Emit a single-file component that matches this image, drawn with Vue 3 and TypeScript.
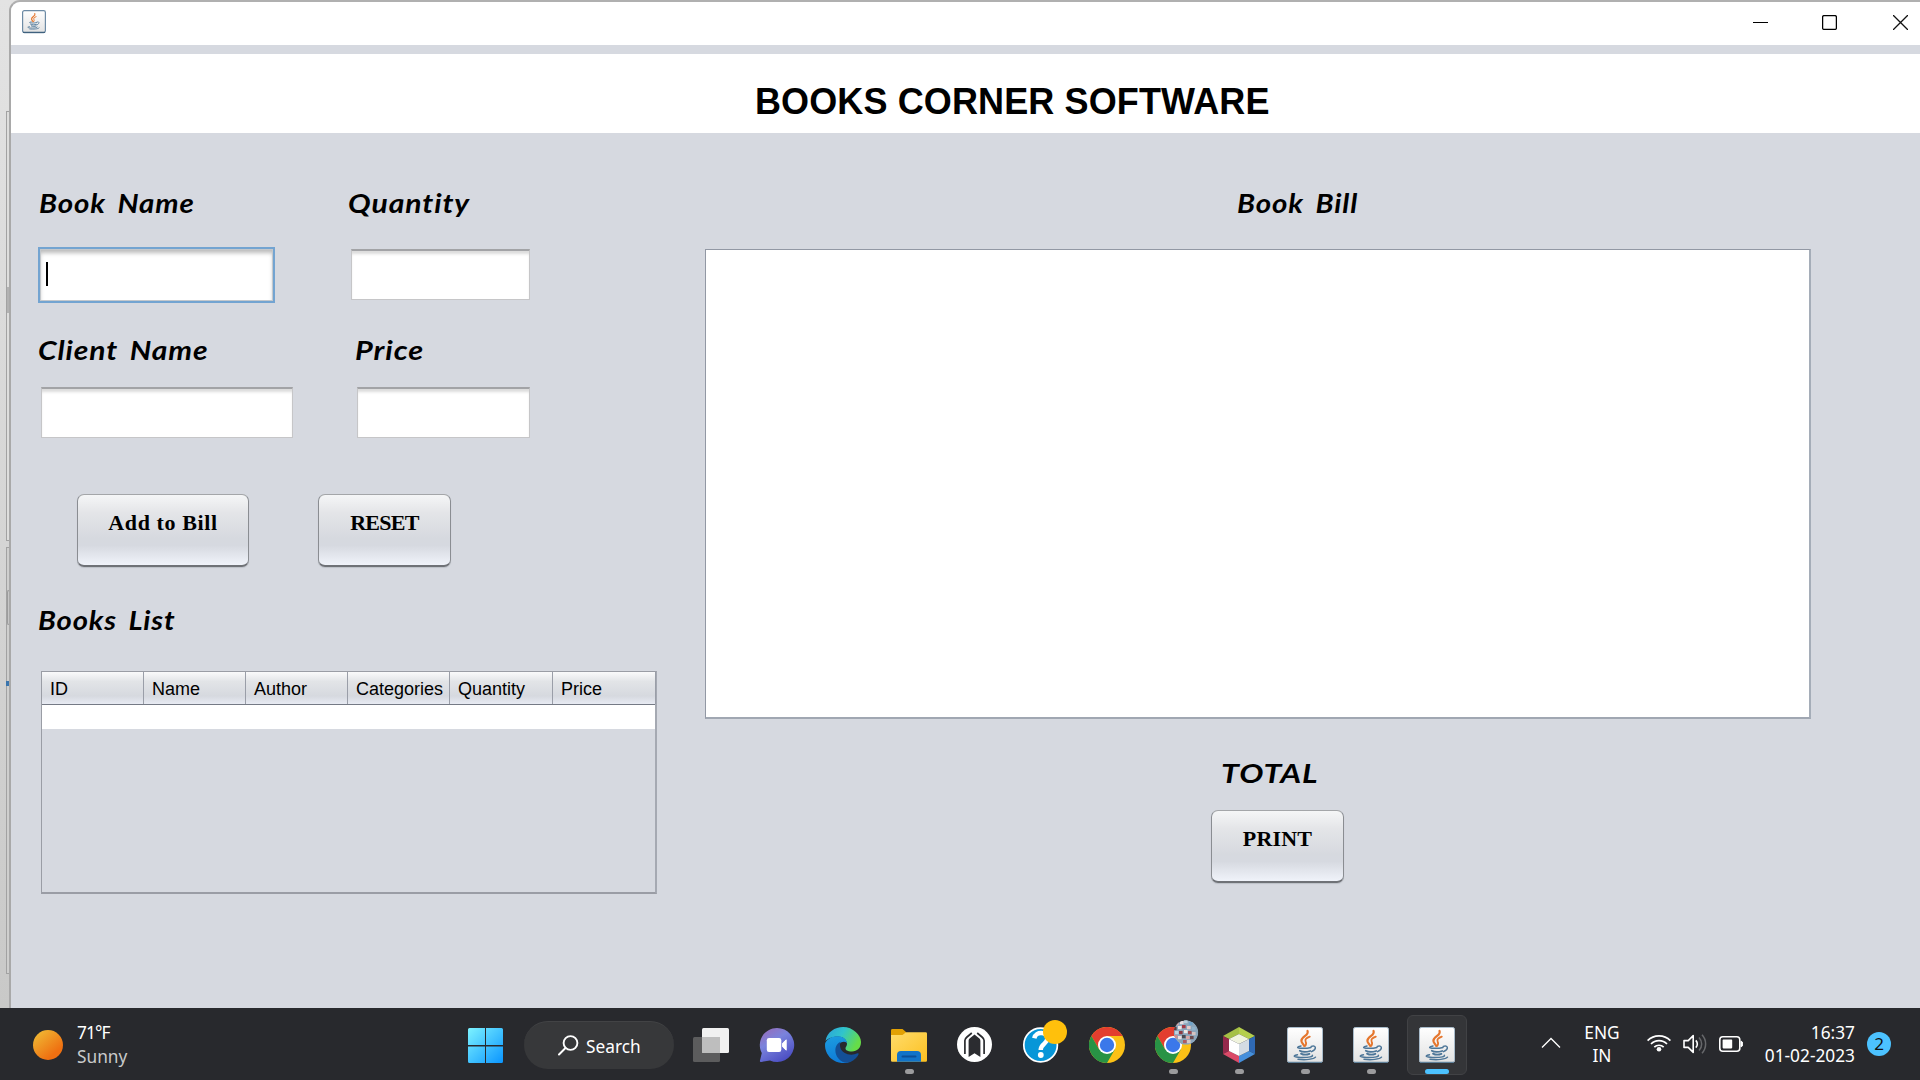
<script setup lang="ts">
interface Column { name: string; width: number }

const columns: Column[] = [
  { name: 'ID', width: 102 },
  { name: 'Name', width: 102 },
  { name: 'Author', width: 102 },
  { name: 'Categories', width: 102 },
  { name: 'Quantity', width: 103 },
  { name: 'Price', width: 103 },
]

const javaTasks: { id: number; active: boolean }[] = [
  { id: 1, active: false },
  { id: 2, active: false },
  { id: 3, active: true },
]

const avatarDots: [number, number, string][] = [
  [22, -3, '#d9a5a8'], [27, -4, '#e8dde0'], [31, -5, '#b9cfdd'], [36, -3, '#6fa3c9'],
  [20, 2, '#5b3a3c'], [25, 1, '#f0e4e4'], [29, 0, '#a33a48'], [34, 1, '#e5c9c8'], [39, 2, '#8fb2cb'],
  [22, 6, '#bfd2e0'], [26, 6, '#8d3a42'], [31, 5, '#f3e8e6'], [35, 6, '#9f4a50'], [39, 7, '#d5c3c3'],
  [21, 10, '#c98f92'], [25, 11, '#ecdcdc'], [29, 10, '#4d4a52'], [33, 11, '#dba7a7'], [37, 11, '#6b4a4e'],
  [26, 15, '#8aa5b5'], [30, 15, '#b05a60'], [34, 15, '#d8c8c4'],
]
</script>

<template>
  <div class="screen">
    <svg width="0" height="0" class="defs" aria-hidden="true">
      <defs>
        <linearGradient id="tile" x1="0" y1="0" x2="0" y2="1">
          <stop offset="0" stop-color="#ffffff" /><stop offset="1" stop-color="#e2e2e2" />
        </linearGradient>
        <linearGradient id="win" x1="0" y1="0" x2="1" y2="1">
          <stop offset="0" stop-color="#7df3ff" /><stop offset="1" stop-color="#0a95ff" />
        </linearGradient>
        <linearGradient id="chat" x1="0" y1="0" x2="0.6" y2="1">
          <stop offset="0" stop-color="#9a68b4" /><stop offset="0.45" stop-color="#7a83dc" /><stop offset="1" stop-color="#4d50c4" />
        </linearGradient>
        <linearGradient id="edgeTop" x1="0" y1="0" x2="1" y2="0.4">
          <stop offset="0" stop-color="#2aa0dc" /><stop offset="0.5" stop-color="#30c4cc" /><stop offset="1" stop-color="#66dd48" />
        </linearGradient>
        <linearGradient id="edgeLeft" x1="0" y1="0" x2="0.2" y2="1">
          <stop offset="0" stop-color="#1c9de0" /><stop offset="1" stop-color="#0f7cd8" />
        </linearGradient>
        <linearGradient id="folder" x1="0" y1="0" x2="1" y2="1">
          <stop offset="0" stop-color="#ffdc6b" /><stop offset="1" stop-color="#fcc021" />
        </linearGradient>
        <symbol id="cup" viewBox="0 0 36 36">
          <g fill="none" stroke-linecap="round">
            <path d="M20.5 4C22.5 8.5 14 9.5 14.4 14C14.6 16 16.6 17 17.2 19" stroke="#e5762d" stroke-width="2.2" />
            <path d="M22.8 9.6C19.6 10.8 17.7 12.3 18.6 14.4C19.4 16 19.7 17 18.2 18.8" stroke="#e5762d" stroke-width="1.8" />
            <path d="M14 19C10 19.8 9.5 20.8 13 21.2C17 21.6 21 21.2 24 20.5" stroke="#4d7698" stroke-width="1.5" />
            <path d="M24.3 19.4C28.8 17.8 30.4 21.8 24.5 24.7" stroke="#4d7698" stroke-width="1.5" />
            <path d="M12.8 23.7C15 25 20 25 23.2 24M14 26.6C16.5 27.9 20 27.8 22.4 26.8" stroke="#4d7698" stroke-width="1.8" />
            <path d="M10.5 27.8C3.5 29.2 9 30.5 16 30.5C22 30.5 26.5 29.5 25.3 28.2M11 32.3C18 33.2 27 32.4 28.5 30.2" stroke="#4d7698" stroke-width="1.4" />
          </g>
        </symbol>
        <symbol id="chrome" viewBox="-18 -18 36 36">
          <circle r="18" fill="#fbc116" />
          <path d="M-15.6-9A18 18 0 0 1 15.6-9H0L-7.8 4.5Z" fill="#e33e2f" />
          <path d="M-15.6-9L-7.8 4.5L7.8 4.5L0 18A18 18 0 0 1-15.6-9Z" fill="#289345" />
          <circle r="9" fill="#fff" /><circle r="7.2" fill="#3b78ea" />
        </symbol>
      </defs>
    </svg>

    <div class="desktop">
      <aside class="behind">
        <div class="pane pane-a"><i class="block"></i></div>
        <div class="pane pane-b"><i class="knob"></i><i class="mark"></i></div>
      </aside>

      <main class="window">
        <header class="titlebar">
          <svg class="app-icon" width="24" height="24" viewBox="0 0 24 24">
            <rect x="0.6" y="0.6" width="22.8" height="22" rx="1.8" fill="url(#tile)" stroke="#6d8ba5" stroke-width="1.2" />
            <path d="M1 22.4H23" stroke="#3f617e" stroke-width="1.2" />
            <use href="#cup" x="1" y="1.5" width="21" height="19.5" />
          </svg>
          <div class="controls">
            <svg width="15" height="15"><path d="M0 7.5H15" stroke="#000" /></svg>
            <svg width="15" height="15"><rect x="0.6" y="0.6" width="13.8" height="13.8" rx="1.5" fill="none" stroke="#000" stroke-width="1.3" /></svg>
            <svg width="15" height="15"><path d="M0 0L15 15M15 0L0 15" stroke="#111" stroke-width="1.3" /></svg>
          </div>
        </header>
        <div class="banner"><h1>BOOKS CORNER SOFTWARE</h1></div>

        <div class="content">
          <section class="left">
            <div class="form">
              <div class="col first">
                <label class="ink book-name">Book Name</label>
                <div class="field focused"><span class="caret"></span></div>
                <label class="ink client-name">Client Name</label>
                <div class="field client"></div>
              </div>
              <div class="col second">
                <label class="ink quantity">Quantity</label>
                <div class="field qty"></div>
                <label class="ink price">Price</label>
                <div class="field cost"></div>
              </div>
            </div>
            <div class="actions">
              <button class="btn add"><span>Add to Bill</span></button>
              <button class="btn reset"><span>RESET</span></button>
            </div>
            <div class="ink books-list">Books List</div>
            <div class="table">
              <div class="thead">
                <div v-for="c in columns" :key="c.name" class="th" :style="{ width: c.width + 'px' }">{{ c.name }}</div>
              </div>
              <div class="row"></div>
            </div>
          </section>

          <section class="right">
            <div class="ink book-bill">Book Bill</div>
            <div class="bill"></div>
            <div class="ink total">TOTAL</div>
            <button class="btn print"><span>PRINT</span></button>
          </section>
        </div>
      </main>
    </div>

    <footer class="taskbar">
      <div class="weather">
        <div class="sun"></div>
        <div class="wtext"><b>71°F</b><span>Sunny</span></div>
      </div>

      <div class="apps">
        <svg class="start" width="35" height="35" viewBox="0 0 35 35">
          <path d="M1.5 0H17V17H0V1.5A1.5 1.5 0 0 1 1.5 0ZM18 0H33.5A1.5 1.5 0 0 1 35 1.5V17H18ZM0 18.5H17V35H1.5A1.5 1.5 0 0 1 0 33.5ZM18 18.5H35V33.5A1.5 1.5 0 0 1 33.5 35H18Z" fill="url(#win)" />
        </svg>
        <div class="search">
          <svg width="21" height="21" viewBox="0 0 21 21"><circle cx="12.5" cy="8" r="6.9" fill="none" stroke="#fff" stroke-width="1.9" /><path d="M7.5 13L1 19.5" stroke="#fff" stroke-width="2" stroke-linecap="round" /></svg>
          <span>Search</span>
        </div>

        <div class="slot">
          <svg width="36" height="36" viewBox="0 0 36 36">
            <rect x="0" y="10" width="27" height="25" rx="1.5" fill="#5c5c5d" />
            <rect x="9" y="1" width="27" height="25" rx="1.5" fill="#f1f1f1" />
            <path d="M9 10H27V26H10.5A1.5 1.5 0 0 1 9 24.5Z" fill="#bebebe" />
          </svg>
        </div>
        <div class="slot">
          <svg width="36" height="36" viewBox="0 0 36 36">
            <path d="M18 1A17 17 0 1 1 11 33.4L2.2 35C1 35.2.7 34.5 1 33.6L2.8 26A17 17 0 0 1 18 1Z" fill="url(#chat)" />
            <rect x="7.8" y="11" width="14.5" height="14" rx="2.2" fill="#fff" />
            <path d="M23.6 16.2L27.2 12.8V23.2L23.6 19.8Z" fill="#fff" stroke="#fff" stroke-linejoin="round" />
          </svg>
        </div>
        <div class="slot">
          <svg width="36" height="36" viewBox="0 0 36 36">
            <path d="M.5 14C2 5 10 0 18 0C28 0 36 8 36 15C36 21 32 24.5 27 24.5C22 24.5 20.5 22.8 20.5 21.3C20.5 20 22 19 22 17C22 13 18 9.5 13 9.5C7 9.5 2 12 .5 14Z" fill="url(#edgeTop)" />
            <path d="M.2 16C3 11 8 9.3 12.5 9.3C17.5 9.3 21.5 12 22 16C19.5 13.8 16.5 14.5 14.5 17C12 21 13 30 24 35C20 37 12 36.5 6 31.5C1 27-.5 21 .2 16Z" fill="url(#edgeLeft)" />
            <path d="M16 14.5C10 17 8.5 25 13 31C17 36 22 36.5 25.5 35C30 32.8 32.5 29.5 33.6 27.2C33.9 26.4 33.2 26 32.5 26.3C26 29.5 17 27 15.3 20.5C14.7 18 14.8 16 16 14.5Z" fill="#134f96" />
          </svg>
        </div>
        <div class="slot run">
          <svg width="36" height="36" viewBox="0 0 36 36">
            <path d="M0 3.4A1.4 1.4 0 0 1 1.4 2H11.5L15 5V9H0Z" fill="#e2a104" />
            <path d="M0 8H11.5L15 5.2H34.6A1.4 1.4 0 0 1 36 6.6V33.5A1.2 1.2 0 0 1 34.8 34.7H1.2A1.2 1.2 0 0 1 0 33.5Z" fill="url(#folder)" />
            <path d="M6 34.7V28A4 4 0 0 1 10 24H26A4 4 0 0 1 30 28V34.7Z" fill="#1173c8" />
            <path d="M11.5 29.5H24.5" stroke="#0b4f97" stroke-width="2" stroke-linecap="round" />
          </svg>
        </div>
        <div class="slot">
          <svg width="36" height="36" viewBox="0 0 36 36">
            <circle cx="17.5" cy="17.5" r="17.5" fill="#fff" />
            <path d="M11.6 30V14.2C11.6 12.6 12 12 13.5 10.8L17.5 7.6L21.5 10.8C23 12 23.4 12.6 23.4 14.2V30L17.5 26.2Z" fill="#2b2c30" />
            <path d="M7.9 27V13.5C7.9 12 8.6 11.2 10 10L14.8 6M27.1 27V13.5C27.1 12 26.4 11.2 25 10L20.2 6" fill="none" stroke="#2b2c30" stroke-width="1.7" />
          </svg>
        </div>
        <div class="slot">
          <svg width="36" height="36" viewBox="0 0 36 36" class="spill">
            <circle cx="17.6" cy="18" r="16.8" fill="#0796d8" stroke="#fff" stroke-width="1.7" />
            <path d="M11.3 11.2C12.8 3.6 25 4.6 24.3 12C23.8 17 17.7 17 17.7 23" fill="none" stroke="#fff" stroke-width="4.5" />
            <circle cx="17.8" cy="28" r="2.9" fill="#fff" />
            <circle cx="32" cy="5" r="12" fill="#ffc00c" />
          </svg>
        </div>
        <div class="slot">
          <svg width="36" height="36"><use href="#chrome" width="36" height="36" /></svg>
        </div>
        <div class="slot run">
          <svg width="36" height="36" class="spill">
            <use href="#chrome" width="36" height="36" />
            <clipPath id="face"><circle cx="31" cy="5.5" r="12.3" /></clipPath>
            <g clip-path="url(#face)">
              <circle cx="31" cy="5.5" r="12.3" fill="#8ba6bc" />
              <rect v-for="(d, i) in avatarDots" :key="i" :x="d[0] - 2" :y="d[1] - 2" width="3.6" height="3.2" :fill="d[2]" />
            </g>
          </svg>
        </div>
        <div class="slot run">
          <svg width="36" height="36" viewBox="0 0 36 36">
            <path d="M2 9L18 0V7L8 12Z" fill="#a5c045" /><path d="M18 0L34 9L28 12L18 7Z" fill="#b5cf4b" />
            <path d="M2 9L8 12V24L2 27Z" fill="#94294b" /><path d="M34 9L28 12V24L34 27Z" fill="#2f69b4" />
            <path d="M2 27L8 24L18 29V36Z" fill="#db4a68" /><path d="M34 27L28 24L18 29V36Z" fill="#458fdb" />
            <path d="M8 12L18 7L28 12L18 17Z" fill="#f0f4dd" /><path d="M8 12L18 17V29L8 24Z" fill="#fff" /><path d="M28 12L18 17V29L28 24Z" fill="#d3dce3" />
          </svg>
        </div>
        <div v-for="t in javaTasks" :key="t.id" class="slot run" :class="{ active: t.active }">
          <svg width="36" height="36" viewBox="0 0 36 36">
            <rect x="0.5" y="0.5" width="35" height="35" rx="1.8" fill="url(#tile)" stroke="#a9bccb" />
            <path d="M1 35.3H35" stroke="#5f8099" stroke-width="1.2" />
            <use href="#cup" width="36" height="36" />
          </svg>
        </div>
      </div>

      <div class="tray">
        <svg class="chev" width="20" height="12" viewBox="0 0 20 12"><path d="M1 10.5L10 1.5L19 10.5" fill="none" stroke="#fff" stroke-width="1.3" /></svg>
        <div class="lang"><span>ENG</span><span>IN</span></div>
        <svg class="wifi" width="24" height="18" viewBox="0 0 24 18">
          <g fill="none" stroke="#fff" stroke-width="1.7"><path d="M.6 6.6A16 16 0 0 1 23.4 6.6M4 10A11.2 11.2 0 0 1 20 10M7.3 13.2A6.6 6.6 0 0 1 16.7 13.2" /></g>
          <circle cx="12" cy="15.3" r="2.3" fill="#fff" />
        </svg>
        <svg class="vol" width="25" height="20" viewBox="0 0 25 20">
          <path d="M1 6.6H5.2L10.2 1.6V18.4L5.2 13.4H1Z" fill="none" stroke="#fff" stroke-width="1.6" stroke-linejoin="round" />
          <path d="M12.8 6.4A5 5 0 0 1 12.8 13.6" fill="none" stroke="#fff" stroke-width="1.6" />
          <path d="M16 3.4A9.5 9.5 0 0 1 16 16.6M19 .8A13.5 13.5 0 0 1 19 19.2" fill="none" stroke="#67686b" stroke-width="1.5" />
        </svg>
        <svg class="bat" width="24" height="16" viewBox="0 0 24 16">
          <rect x="0.8" y="0.8" width="20" height="14.4" rx="3" fill="none" stroke="#fff" stroke-width="1.6" />
          <rect x="3.6" y="3.6" width="9.6" height="8.8" rx="0.8" fill="#fff" />
          <path d="M22 5.2C24.4 5.4 24.4 10.6 22 10.8Z" fill="#fff" stroke="#fff" />
        </svg>
        <div class="clock"><span>16:37</span><span class="date">01-02-2023</span></div>
        <div class="count">2</div>
      </div>
    </footer>
  </div>
</template>

<style>
body { margin: 0; background: #d6d9e0; overflow: hidden; }
</style>

<style scoped>
* { box-sizing: border-box; }
.screen { width: 1920px; height: 1080px; display: flex; flex-direction: column; overflow: hidden; }
.defs { position: absolute; }
.desktop { display: flex; height: 1008px; background: linear-gradient(#e3e3e3, #c9c9c8); }

.behind { width: 9px; flex: none; padding: 111px 0 0 6px; }
.pane { border: 1px solid #a2a2a2; border-right: 0; height: 430px; background: #dededd; }
.pane-a { padding-top: 175px; }
.block { display: block; height: 26px; background: #b2b2b2; }
.pane-b { margin-top: 6px; height: 427px; background: #cfcfce; padding-top: 42px; display: flex; flex-direction: column; }
.knob { height: 35px; border: 1px solid #9c9c9c; border-right: 0; border-radius: 4px 0 0 4px; background: #c6c6c6; }
.mark { margin: 56px 0 0 -1px; height: 5px; background: #3b75ad; }

.window { flex: 1; height: 1008px; border-left: 2px solid #a9a9a9; border-top: 2px solid #b0b0b0; border-top-left-radius: 11px; background: #d6d9e0; overflow: hidden; }
.titlebar { height: 43px; background: #fff; display: flex; justify-content: space-between; }
.app-icon { margin: 8px 0 0 11px; }
.controls { display: flex; padding: 13px 12px 0 0; }
.controls svg { margin-left: 56px; }
.controls svg:first-child { margin-left: 0; margin-right: -2px; }
.banner { margin-top: 9px; height: 79px; background: #fff; padding: 27px 0 0 744px; }
h1 { margin: 0; font: bold 36px/41px "Liberation Sans", Arial, sans-serif; letter-spacing: 0.12px; color: #000; white-space: nowrap; }

.content { display: flex; }
.left { width: 694px; flex: none; }
.form { display: flex; }
.col { display: flex; flex-direction: column; align-items: flex-start; }
.first { width: 337px; padding: 48px 0 0 27px; }
.second { padding: 48px 0 0; }
.ink { flex: none; height: 44px; font: italic bold 27px/44px Lato, "Open Sans", sans-serif; word-spacing: 4px; letter-spacing: 0.8px; color: #000; white-space: nowrap; transform: scaleX(1.1); transform-origin: 0 50%; }
.field { height: 51px; background: #fff; border: 1px solid #c6c6c8; border-top: 2px solid #a2a3a6; box-shadow: inset 0 4px 3px -1px #dcdcdc; }
.book-name { margin-left: 1px; transform: scaleX(1.09); }
.focused { width: 237px; height: 56px; margin-top: 22px; border: 2px solid #73a4d1; box-shadow: inset 0 0 0 1px #c4c8cc, inset 0 4px 4px #bbbbbb; padding: 13px 0 0 6px; }
.caret { display: block; width: 2px; height: 24px; background: #000; }
.client-name { margin-top: 25px; transform: scaleX(1.11); }
.client { width: 252px; margin: 15px 0 0 3px; }
.quantity { transform: scaleX(1.115); }
.qty { width: 179px; margin: 24px 0 0 3px; }
.price { margin: 28px 0 0 7px; transform: scaleX(1.135); }
.cost { width: 173px; margin: 15px 0 0 9px; }

.actions { display: flex; padding: 56px 0 0 66px; }
.btn { appearance: none; margin: 0; padding: 0; height: 73px; border: 1.5px solid #8a8d92; border-top-color: #a4a6a9; border-bottom: 2px solid #6f7277; border-radius: 7px; background: linear-gradient(#f5f6f7 0%, #e4e5e8 25%, #d6d9df 62%, #d6d9e0 72%, #f0f3fa 100%); box-shadow: 0 1px 1px #bcc0c7; display: flex; justify-content: center; font: bold 22px/26px "Liberation Serif", "Times New Roman", serif; color: #000; }
.btn span { margin-top: 15px; white-space: nowrap; }
.add { width: 172px; letter-spacing: 0.6px; }
.reset { width: 133px; margin-left: 69px; letter-spacing: -0.7px; }

.books-list { margin: 31px 0 0 27px; transform: scaleX(1.08); }
.table { margin: 29px 0 0 30px; width: 616px; height: 223px; border: 1px solid #9a9da5; border-right: 2px solid #a5a9b2; border-bottom-width: 2px; }
.thead { display: flex; height: 33px; border-bottom: 1px solid #757a85; background: linear-gradient(#fafafb 0%, #e2e4e7 30%, #d6d9df 75%, #e8ebf3 100%); }
.th { border-right: 1px solid #9a9ea8; flex: none; padding-left: 8px; font: 18px/34px "Liberation Sans", Arial, sans-serif; color: #000; white-space: nowrap; }
.row { height: 24px; background: #fff; }

.right { padding-top: 48px; }
.book-bill { margin-left: 532px; transform: scaleX(1.09); }
.bill { margin-top: 24px; width: 1106px; height: 470px; background: #fff; border: 1px solid #9298a4; border-right: 2px solid #a5adb8; border-bottom: 2px solid #a0a7b2; }
.total { margin: 32px 0 0 516px; transform: scaleX(1.19); }
.print { margin: 15px 0 0 506px; width: 133px; letter-spacing: 0.2px; }

.taskbar { height: 72px; background: #28292d; display: flex; color: #fff; font: 17.3px/23px "Noto Sans", "Open Sans", sans-serif; }
.weather { width: 444px; flex: none; display: flex; padding: 13px 0 0 33px; }
.sun { width: 30px; height: 30px; margin: 9px 14px 0 0; border-radius: 50%; background: linear-gradient(140deg, #f0c238, #ef7011 75%); }
.wtext { display: flex; flex-direction: column; }
.wtext b { font-weight: 400; line-height: 24px; letter-spacing: -0.9px; }
.wtext span { color: #c9c9ca; line-height: 24px; }
.apps { display: flex; }
.start { margin: 20px 21px 0 24px; }
.search { width: 150px; height: 48px; margin: 13px 4px 0 0; border-radius: 24px; background: #37383a; border-top: 1px solid #424345; display: flex; padding: 13px 0 0 34px; }
.search span { margin-left: 7px; line-height: 23px; }
.slot { width: 66px; height: 72px; padding-top: 19px; display: flex; flex-direction: column; align-items: center; }
.slot svg { flex: none; }
.spill { overflow: visible; }
.run::after { content: ""; width: 9px; height: 5px; margin-top: 6px; border-radius: 3px; background: #9b9b9d; }
.active { width: 60px; height: 60px; margin: 7px 3px 0; padding-top: 11px; background: #343538; border: 1px solid #414245; border-radius: 6px; }
.active::after { width: 24px; background: #4cc2ff; }
.tray { display: flex; margin-left: auto; }
.chev { margin-top: 29px; }
.lang { width: 50px; margin: 13px 1px 0 16px; display: flex; flex-direction: column; align-items: center; }
.wifi { margin: 26px 0 0 19px; }
.vol { margin: 26px 0 0 12px; }
.bat { margin: 28px 0 0 11px; }
.clock { width: 112px; margin-top: 13px; display: flex; flex-direction: column; align-items: flex-end; }
.count { width: 24px; height: 24px; margin: 24px 29px 0 12px; border-radius: 50%; background: #4cc2ff; color: #111; font-size: 17px; line-height: 24px; text-align: center; }
</style>
